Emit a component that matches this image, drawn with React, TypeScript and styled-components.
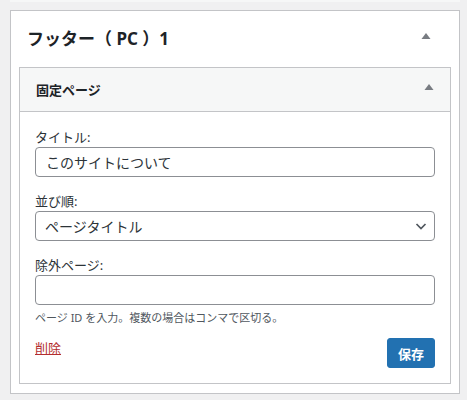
import styled, { createGlobalStyle } from "styled-components";

const GlobalStyle = createGlobalStyle`
    html, body {
        margin: 0;
        padding: 0;
        background: #f0f0f1;
    }
    body {
        font-family: "Noto Sans", "Noto Sans CJK JP", sans-serif;
        color: #1d2327;
    }
`;

function Triangle() {
    return (
        <svg width="10" height="6" viewBox="0 0 10 6">
            <polygon points="5,0 9.5,6 0.5,6" fill="#787c82" />
        </svg>
    );
}

function Chevron() {
    return (
        <svg width="14" height="14" viewBox="0 0 14 14">
            <path d="M2.5 5 L7 9.5 L11.5 5" fill="none" stroke="#50575e" strokeWidth="1.7" />
        </svg>
    );
}

function App() {
    return (
        <>
            <GlobalStyle />
            <Page>
                <PrevTail />
                <Card>
                    <CardHeader>
                        <CardTitle>フッター（ PC ）1</CardTitle>
                        <Toggle><Triangle /></Toggle>
                    </CardHeader>
                    <Widget>
                        <WidgetHeader>
                            <WidgetTitle>固定ページ</WidgetTitle>
                            <Toggle><Triangle /></Toggle>
                        </WidgetHeader>
                        <WidgetBody>
                            <Field>
                                <Label>タイトル:</Label>
                                <TextInput type="text" defaultValue="このサイトについて" />
                            </Field>
                            <Field>
                                <Label>並び順:</Label>
                                <SelectWrap>
                                    <Select defaultValue="title">
                                        <option value="title">ページタイトル</option>
                                        <option value="order">ページ順序</option>
                                        <option value="id">ページ ID</option>
                                    </Select>
                                    <SelectArrow><Chevron /></SelectArrow>
                                </SelectWrap>
                            </Field>
                            <Field>
                                <Label>除外ページ:</Label>
                                <TextInput type="text" />
                                <Description>ページ ID を入力。複数の場合はコンマで区切る。</Description>
                            </Field>
                            <Actions>
                                <DeleteLink href="#">削除</DeleteLink>
                                <SaveButton>保存</SaveButton>
                            </Actions>
                        </WidgetBody>
                    </Widget>
                </Card>
            </Page>
        </>
    );
}

// Styling
const Page = styled.div`
    padding: 0 7px 5px 10px;
`;

const PrevTail = styled.div`
    height: 2px;
    margin-bottom: 8px;
    background: #f6f7f7;
`;

const Card = styled.div`
    background: #fff;
    border: 1px solid #c3c4c7;
    padding: 0 8px 9px 8px;
`;

const CardHeader = styled.div`
    height: 56px;
    display: flex;
    align-items: center;
    justify-content: space-between;
    padding: 0 20px 0 8px;
`;

const CardTitle = styled.h2`
    margin: 0;
    font-size: 17px;
    font-weight: 700;
    color: #1d2327;
    line-height: 1.3;
`;

const Toggle = styled.span`
    display: flex;
    align-items: center;
    margin-top: -6px;
`;

const Widget = styled.div`
    border: 1px solid #c3c4c7;
`;

const WidgetHeader = styled.div`
    height: 43px;
    display: flex;
    align-items: center;
    justify-content: space-between;
    padding: 0 16px 0 16px;
    background: #f6f7f7;
    border-bottom: 1px solid #c3c4c7;
`;

const WidgetTitle = styled.h3`
    margin: 0;
    font-size: 13px;
    font-weight: 700;
    color: #1d2327;
`;

const WidgetBody = styled.div`
    padding: 16px 15px 15px 15px;
    display: flex;
    flex-direction: column;
    gap: 15px;
`;

const Field = styled.div`
    display: flex;
    flex-direction: column;
`;

const Label = styled.label`
    font-size: 13px;
    line-height: 19px;
    color: #2c3338;
`;

const TextInput = styled.input`
    box-sizing: border-box;
    height: 30px;
    width: 100%;
    margin: 0;
    padding: 0 10px;
    border: 1px solid #8c8f94;
    border-radius: 4px;
    font-family: inherit;
    font-size: 14px;
    color: #2c3338;
    background: #fff;
    outline: none;
`;

const SelectWrap = styled.div`
    position: relative;
`;

const Select = styled.select`
    box-sizing: border-box;
    appearance: none;
    height: 30px;
    width: 100%;
    margin: 0;
    padding: 0 30px 0 9px;
    border: 1px solid #8c8f94;
    border-radius: 4px;
    font-family: inherit;
    font-size: 14px;
    color: #2c3338;
    background: #fff;
    outline: none;
`;

const SelectArrow = styled.span`
    position: absolute;
    right: 7px;
    top: 8px;
    display: flex;
    pointer-events: none;
`;

const Description = styled.p`
    margin: 4px 0 0 0;
    font-size: 11px;
    line-height: 17px;
    color: #50575e;
`;

const Actions = styled.div`
    display: flex;
    justify-content: space-between;
    align-items: flex-start;
    margin-top: -3px;
`;

const DeleteLink = styled.a`
    font-size: 13px;
    line-height: 20px;
    color: #b32d2e;
    text-decoration: underline;
`;

const SaveButton = styled.button`
    height: 30px;
    width: 48px;
    padding: 0;
    border: 1px solid #2271b1;
    border-radius: 3px;
    background: #2271b1;
    color: #fff;
    font-family: inherit;
    font-size: 13px;
    font-weight: 600;
    cursor: pointer;
`;

export default App;
